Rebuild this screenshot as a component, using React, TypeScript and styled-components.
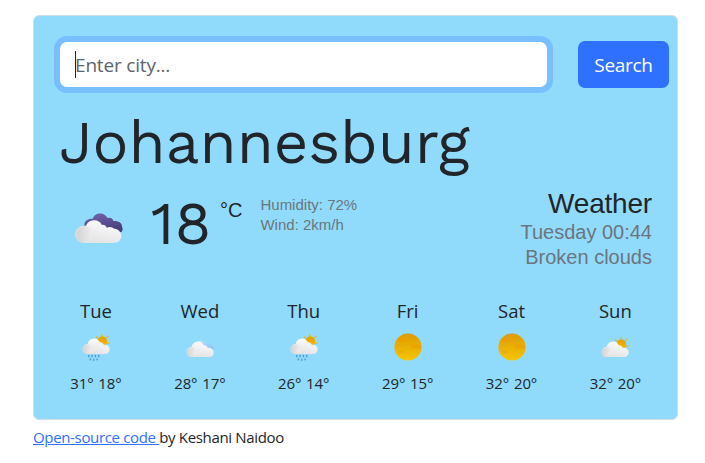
import React, { useId } from "react";
import styled, { createGlobalStyle } from "styled-components";

const Global = createGlobalStyle`
  *, *::before, *::after { box-sizing: border-box; }
  body {
    margin: 0;
    background: #fff;
    color: #212529;
    font-family: "Segoe UI", "Open Sans", "Noto Sans", sans-serif;
  }
  h1, h2, p { margin: 0; font-weight: 400; }
`;

const Page = styled.div`
  width: 645px;
  margin: 15px 0 0 33px;
`;

const Card = styled.main`
  height: 405px;
  padding: 25px 8px 0 26px;
  border: 1px solid #cfdfe6;
  border-radius: 6px;
  background: #90dbfb;
`;

const SearchForm = styled.form`
  display: flex;
  justify-content: space-between;
  height: 47px;
`;

const Field = styled.label`
  display: flex;
  align-items: center;
  width: 487px;
  height: 45px;
  margin-top: 1px;
  padding-left: 15px;
  border-radius: 7px;
  background: #fff;
  box-shadow: 0 0 0 6px #78bfff;
`;

const Caret = styled.span`
  width: 1px;
  height: 27px;
  background: #212529;
`;

const CityInput = styled.input`
  flex: 1;
  min-width: 0;
  margin-left: -1px;
  padding: 0;
  border: 0;
  outline: 0;
  background: transparent;
  font: 19px "Segoe UI", "Open Sans", sans-serif;
  letter-spacing: -0.18px;
  &::placeholder { color: #5d646b; opacity: 1; }
`;

const SearchButton = styled.button`
  width: 91px;
  padding: 0;
  border: 0;
  border-radius: 7px;
  background: #2f70ff;
  color: #fff;
  font: 19px "Segoe UI", "Open Sans", sans-serif;
  letter-spacing: -0.3px;
`;

const City = styled.h1`
  height: 81px;
  margin: 20px 0 0 -1px;
  font: 400 60px/70px "Work Sans", Inter, sans-serif;
  white-space: nowrap;
`;

const Current = styled.section`
  display: flex;
  height: 109px;
  margin-right: 17px;
`;

const CurrentIcon = styled.div`
  width: 50px;
  margin: 16px 0 0 15px;
`;

const Temperature = styled.strong`
  width: 69px;
  margin: 0 0 0 26px;
  font: 400 60px/70px "Work Sans", Inter, sans-serif;
`;

const Unit = styled.span`
  margin-top: 9px;
  font: 20px/24px "Liberation Sans", Arial, sans-serif;
`;

const Details = styled.div`
  margin: 6px 0 0 18px;
  color: #6c757d;
  font: 15px/20px "Liberation Sans", Arial, sans-serif;
  white-space: nowrap;
`;

const Summary = styled.div`
  margin: -1px 0 0 auto;
  color: #6c757d;
  text-align: right;
  font: 20px/25px "Liberation Sans", Arial, sans-serif;
`;

const SummaryTitle = styled.h2`
  color: #212529;
  font-size: 28px;
  line-height: 32px;
  letter-spacing: -0.2px;
`;

const Forecast = styled.section`
  display: grid;
  grid-template-columns: repeat(6, 103.9px);
  margin-left: -16px;
`;

const Day = styled.article`
  display: flex;
  flex-direction: column;
  align-items: center;
`;

const DayName = styled.span`
  font-size: 18.5px;
  line-height: 26px;
`;

const DayIcon = styled.div<{ $drop: number }>`
  display: flex;
  height: 30px;
  margin: 8px 0;
  padding-top: ${(p) => p.$drop}px;
`;

const DayTemps = styled.span`
  font-size: 15px;
  line-height: 26px;
  letter-spacing: -0.1px;
  word-spacing: 1px;
`;

const Credit = styled.p`
  margin-top: 6px;
  font-size: 15px;
  line-height: 22px;
  letter-spacing: -0.34px;
`;

const CreditLink = styled.a`
  color: #2f70ff;
  text-decoration: underline;
  white-space: pre;
`;

type Kind = "broken" | "rain" | "cloud" | "sun" | "partly";

const DROP: Record<Kind, number> = { broken: 0, rain: 0, cloud: 3, sun: 0, partly: 3 };

const CLOUD = "M8 31.5a8.2 8.2 0 0 1 0-17.6q1.2-.4 2.4-.3A9.2 9.2 0 0 1 27 12.8a4 4 0 0 1 5 2.8 7.7 7.7 0 0 1 8 1.2c3.7.1 7.2 3.2 7.2 7.5 0 4.2-3.2 7.2-7.2 7.2Z";
const SMALL_CLOUD = "M9 31.5a9 9 0 0 1 0-18 11.5 11.5 0 0 1 21.5-3.6 8 8 0 0 1 7.5 5c5.5-.5 10.5 3 10.5 8.3 0 4.8-3.7 8.3-8.5 8.3Z";
const BACK_CLOUD = "M9 14c-1-5 3-8 8.5-7.6 2-7 12.5-7.5 15.5-.6 3-1.4 5.5.4 6 2.8 5-.4 9 1.8 9 6 1.7 4-.6 6.4-2.5 5.6L12 18Z";
const SMALL_BACK_CLOUD = "M16 10c1-9 14-11 18-4 6-2 8 1 9 4 5 0 7 5 4 9L28 20Z";

function WeatherIcon({ kind, width }: { kind: Kind; width: number }) {
  const id = useId();
  const white = `${id}w`;
  const back = `${id}b`;
  const gold = `${id}g`;
  if (kind === "sun") {
    return (
      <svg width="28" height="30" viewBox="0 0 28 30">
        <defs>
          <linearGradient id={gold} x2="0" y2="1">
            <stop stopColor="#de9a04" />
            <stop offset="1" stopColor="#f6c600" />
          </linearGradient>
        </defs>
        <circle cx="14" cy="15" r="13.6" fill={`url(#${gold})`} />
        <g fill="#ef9a00" opacity=".5">
          <rect x="4" y="6" width="8" height="4" rx="2" />
          <rect x="17" y="12.5" width="10" height="4" rx="1.5" />
          <rect x="5" y="19" width="5" height="2" rx="1" />
        </g>
      </svg>
    );
  }
  const sunny = kind === "rain" || kind === "partly";
  const big = kind === "broken";
  return (
    <svg width={width} height={width * 1.1} viewBox="-1 -8 50 55">
      <defs>
        <linearGradient id={white} x1="0" y1="1" x2=".4" y2="0">
          <stop stopColor="#dedede" />
          <stop offset="1" stopColor="#fafafa" />
        </linearGradient>
        <linearGradient id={`${white}2`}>
          <stop stopColor="#d2d2d2" />
          <stop offset="1" stopColor="#eeeeee" />
        </linearGradient>
        <linearGradient id={back} x2=".6" y2="1">
          <stop stopColor={big ? "#7566b0" : "#bde4ff"} />
          <stop offset="1" stopColor={big ? "#493e7c" : "#86c3f2"} />
        </linearGradient>
        <linearGradient id={gold} x2="0" y2="1">
          <stop stopColor="#e3a000" />
          <stop offset="1" stopColor="#f5bd00" />
        </linearGradient>
      </defs>
      {sunny ? (
        <g transform="translate(35 9)">
          <g stroke="#e8b51c" strokeWidth="2.2">
            <path d="M0-8V-12.5M7-6l4-4M9 3h4.5M-7-6l-4-3.5" />
          </g>
          <circle r="9" fill={`url(#${gold})`} />
        </g>
      ) : (
        <path d={big ? BACK_CLOUD : SMALL_BACK_CLOUD} fill={`url(#${back})`} />
      )}
      <path d={big ? CLOUD : SMALL_CLOUD} fill={`url(#${white})`} />
      <circle cx="8.8" cy="22.7" r="8.8" fill={`url(#${white}2)`} />
      {kind === "rain" && (
        <g stroke="#4e98d4" strokeWidth="2.5" strokeLinecap="round">
          <path d="M11 34v2M17 34v2M23 34v2M29 34v2M14 40v1.5M20 41v1.5M26 40v1.5" />
        </g>
      )}
    </svg>
  );
}

const days: { name: string; kind: Kind; temps: string }[] = [
  { name: "Tue", kind: "rain", temps: "31° 18°" },
  { name: "Wed", kind: "cloud", temps: "28° 17°" },
  { name: "Thu", kind: "rain", temps: "26° 14°" },
  { name: "Fri", kind: "sun", temps: "29° 15°" },
  { name: "Sat", kind: "sun", temps: "32° 20°" },
  { name: "Sun", kind: "partly", temps: "32° 20°" },
];

export default function App() {
  return (
    <>
      <Global />
      <Page>
        <Card>
          <SearchForm onSubmit={(e) => e.preventDefault()}>
            <Field>
              <Caret />
              <CityInput placeholder="Enter city..." />
            </Field>
            <SearchButton type="submit">Search</SearchButton>
          </SearchForm>
          <City>Johannesburg</City>
          <Current>
            <CurrentIcon>
              <WeatherIcon kind="broken" width={48} />
            </CurrentIcon>
            <Temperature>18</Temperature>
            <Unit>°C</Unit>
            <Details>
              <p>Humidity: 72%</p>
              <p>Wind: 2km/h</p>
            </Details>
            <Summary>
              <SummaryTitle>Weather</SummaryTitle>
              <p>Tuesday 00:44</p>
              <p>Broken clouds</p>
            </Summary>
          </Current>
          <Forecast>
            {days.map((day) => (
              <Day key={day.name}>
                <DayName>{day.name}</DayName>
                <DayIcon $drop={DROP[day.kind]}>
                  <WeatherIcon kind={day.kind} width={28} />
                </DayIcon>
                <DayTemps>{day.temps}</DayTemps>
              </Day>
            ))}
          </Forecast>
        </Card>
        <Credit>
          <CreditLink href="#">{"Open-source code "}</CreditLink>by Keshani Naidoo
        </Credit>
      </Page>
    </>
  );
}
